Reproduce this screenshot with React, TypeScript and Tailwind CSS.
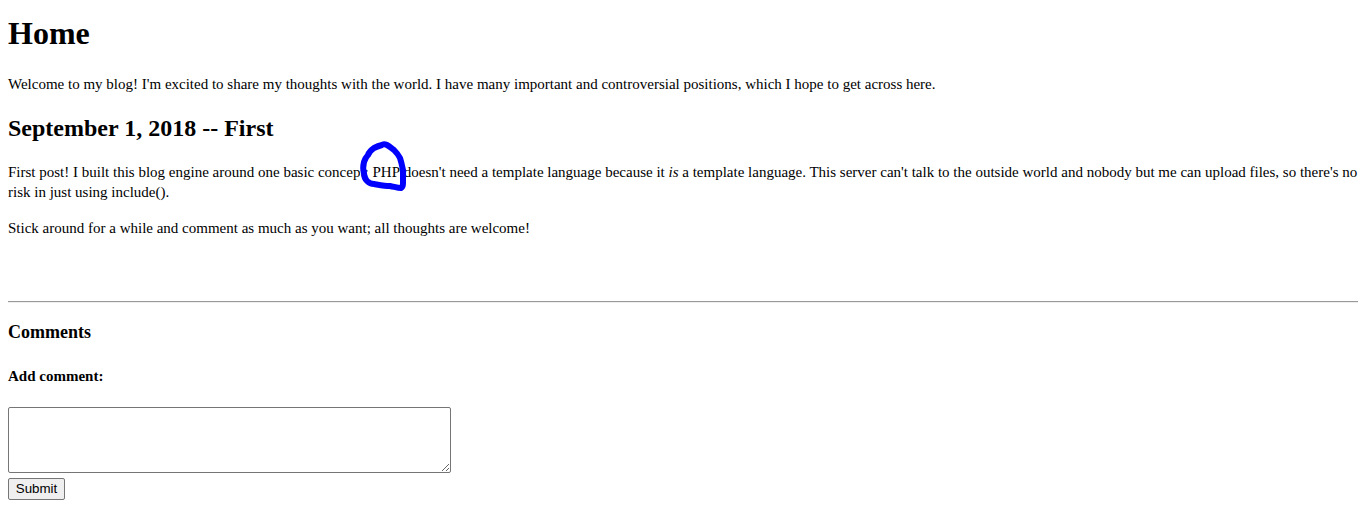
export default function App() {
  return (
    <div className="min-h-[512px] bg-white px-2 pt-[15px] text-[15px] leading-[20px] text-black font-['Liberation_Serif','Times_New_Roman',serif]">
      <h1 className="text-[32px] leading-[37px] font-bold">Home</h1>

      <p className="mt-[22px]">
        Welcome to my blog! I'm excited to share my thoughts with the world. I have many important and
        controversial positions, which I hope to get across here.
      </p>

      <h2 className="mt-5 text-[24px] leading-[28px] font-bold">September 1, 2018 -- First</h2>

      <p className="mt-5">
        First post! I built this blog engine around one basic concept:{' '}
        <span className="relative">
          PHP
          {/* hand-drawn highlight */}
          <svg
            className="pointer-events-none absolute left-[-13px] top-[-23px] h-[52px] w-[50px] overflow-visible"
            viewBox="0 0 50 52"
            fill="none"
          >
            <path
              d="M22 4 C18 5 16 6 14 7 C11 9 9 11 8 14 C6 16 5 18 4 21 C3 25 3 29 4 32 C4 36 5 38 7 40 C9 42 11 43 14 43 C20 44 25 45 30 45 C35 46 38 47 41 47 C43 46 43 44 43 42 C43 37 43 33 43 29 C42 24 41 20 40 17 C38 13 36 11 34 9 C31 7 29 5 27 4 C25 3 23 3 22 4 Z"
              stroke="#0000ff"
              strokeWidth={6}
              strokeLinejoin="round"
              strokeLinecap="round"
            />
          </svg>
        </span>{' '}
        doesn't need a template language because it <em>is</em> a template language. This server can't
        talk to the outside world and nobody but me can upload files, so there's no risk in just using
        include().
      </p>

      <p className="mt-4">Stick around for a while and comment as much as you want; all thoughts are welcome!</p>

      <hr className="mt-[63px] border-t border-b border-t-[#9a9a9a] border-b-[#eeeeee]" />

      <h3 className="mt-[18px] text-[18px] leading-[22px] font-bold">Comments</h3>

      <h4 className="mt-[23px] text-[15px] leading-[20px] font-bold">Add comment:</h4>

      <form className="mt-[21px]" onSubmit={(e) => e.preventDefault()}>
        <textarea className="block h-[66px] w-[443px] resize rounded-[2px] border border-[#767676] bg-white p-[2px] font-['Liberation_Mono',monospace] text-[13px]" />
        <button
          type="submit"
          className="mt-[5px] block h-[22px] w-[57px] rounded-[2px] border border-[#767676] bg-[#efefef] text-[13.33px] leading-[20px] text-black font-['Liberation_Sans',Arial,sans-serif]"
        >
          Submit
        </button>
      </form>
    </div>
  );
}
